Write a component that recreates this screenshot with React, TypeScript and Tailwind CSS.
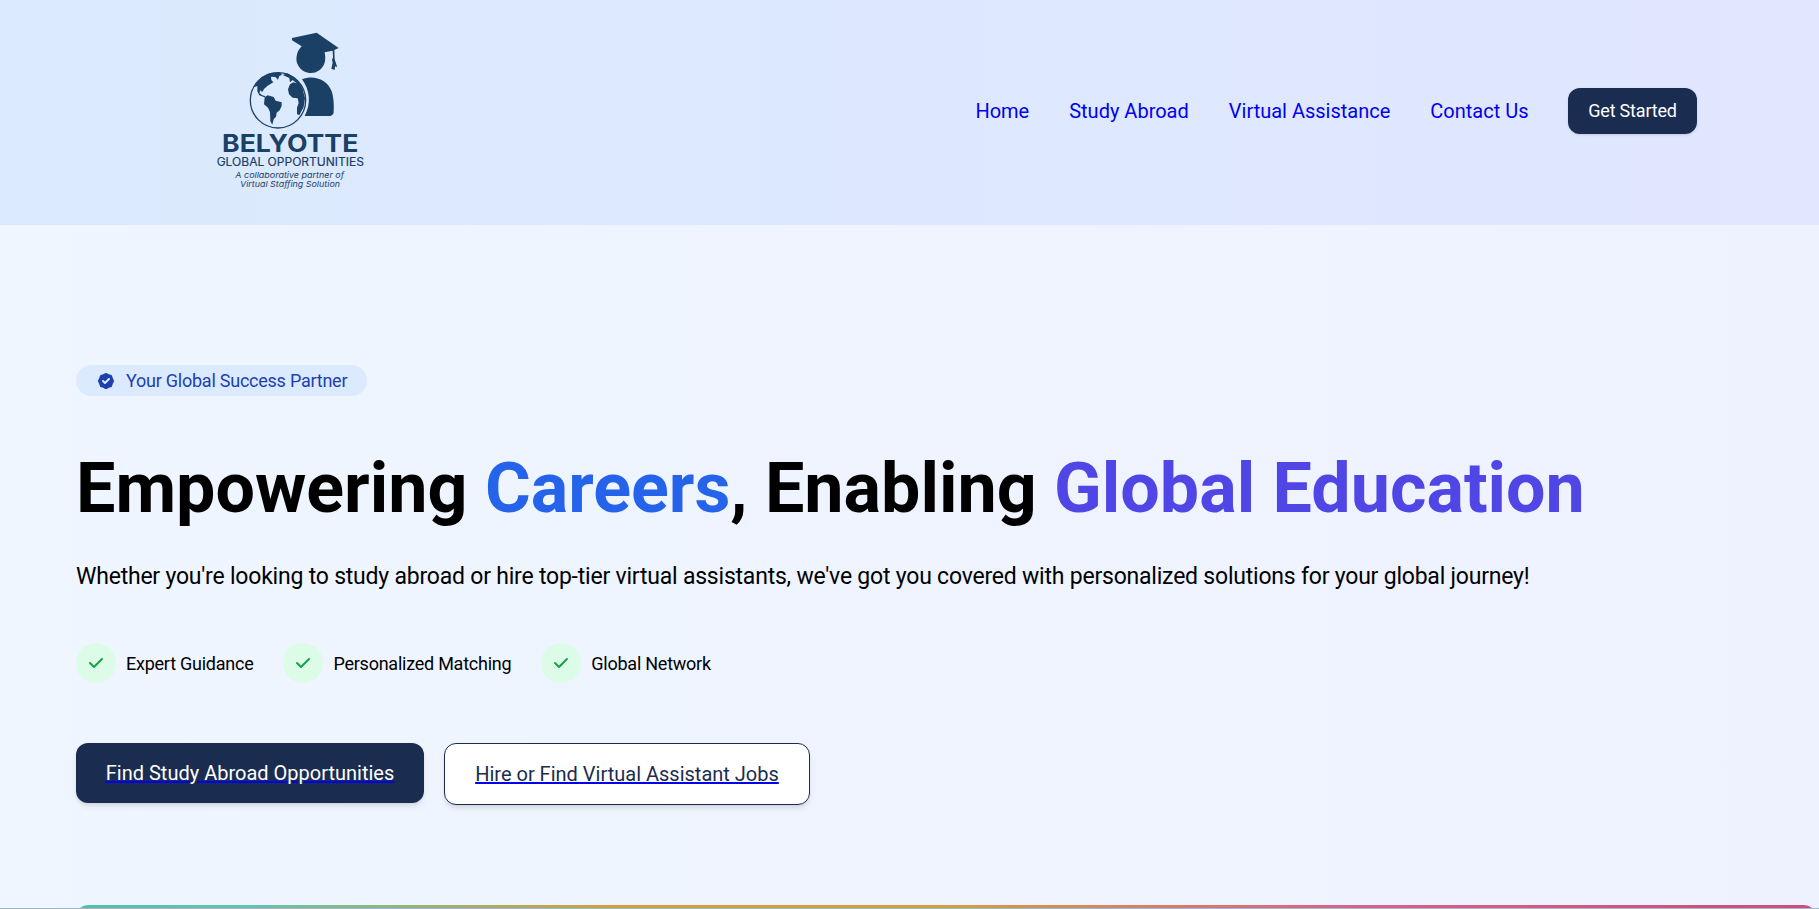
import React from "react";

const navy = "#1b4066";

function Logo() {
  return (
    <svg width="180" height="180" viewBox="0 0 540 540" role="img" aria-label="Belyotte Global Opportunities">
      <g fill={navy}>
        <path d="M276 54 L350 38 L416 84 L403 90 L404 118 L410 136 L411 142 L405 139 L404 150 L394 146 L398 128 L396 120 L399 112 L398 92 L374 97 Q377 110 375 124 A43 43 0 1 1 290 108 Q292 92 305 79 L276 61Z" />
        <path d="M306 178 C340 164 382 178 395 214 C402 235 402 262 401 278 Q398 288 386 288 L314 288 C334 252 330 210 306 178Z" />
        <circle cx="234" cy="241" r="83" fill="none" stroke={navy} strokeWidth="4" />
        <path d="M172 187 L188 170 L210 160 L240 157 L246 164 L238 168 L234 179 L226 171 L213 170 L214 180 L220 187 L203 197 L192 207 L187 216 L180 211 L179 220 L187 226 L197 229 L193 232 L178 226 L172 214 L172 198 L161 202Z" />
        <path d="M194 232 L203 226 L221 231 L227 242 L245 247 L245 258 L239 271 L230 278 L228 290 L221 298 L217 314 L211 304 L210 276 L204 263 L192 253Z" />
        <path d="M248 165 L262 160 L281 172 L298 188 L308 208 L315 235 L311 261 L298 286 L291 282 L291 263 L296 249 L293 235 L278 233 L267 223 L264 208 L270 193 L280 187 L290 190 L278 180 L270 187 L268 174Z" />
      </g>
      <g fill={navy} fontFamily="Inter, sans-serif">
        <text x="66" y="396" fontSize="71" fontWeight="700" textLength="409" lengthAdjust="spacingAndGlyphs">BELYOTTE</text>
        <text x="50" y="437" fontSize="34" fontWeight="400" stroke={navy} strokeWidth="0.500" textLength="442" lengthAdjust="spacingAndGlyphs">GLOBAL OPPORTUNITIES</text>
        <g fontSize="24" fontStyle="italic">
          <text x="106" y="474" textLength="326" lengthAdjust="spacingAndGlyphs">A collaborative partner of</text>
          <text x="120" y="500" textLength="300" lengthAdjust="spacingAndGlyphs">Virtual Staffing Solution</text>
        </g>
      </g>
    </svg>
  );
}

function VerifiedIcon() {
  return (
    <svg width="20" height="20" viewBox="0 0 20 20" fill="currentColor">
      <path
        fillRule="evenodd"
        clipRule="evenodd"
        d="M6.267 3.455a3.066 3.066 0 001.745-.723 3.066 3.066 0 013.976 0 3.066 3.066 0 001.745.723 3.066 3.066 0 012.812 2.812c.051.643.304 1.254.723 1.745a3.066 3.066 0 010 3.976 3.066 3.066 0 00-.723 1.745 3.066 3.066 0 01-2.812 2.812 3.066 3.066 0 00-1.745.723 3.066 3.066 0 01-3.976 0 3.066 3.066 0 00-1.745-.723 3.066 3.066 0 01-2.812-2.812 3.066 3.066 0 00-.723-1.745 3.066 3.066 0 010-3.976 3.066 3.066 0 00.723-1.745 3.066 3.066 0 012.812-2.812zm7.440 5.252a1 1 0 00-1.414-1.414L9 10.586 7.707 9.293a1 1 0 00-1.414 1.414l2 2a1 1 0 001.414 0l4-4z"
      />
    </svg>
  );
}

function Feature({ label }: { label: string }) {
  return (
    <div className="flex items-center gap-2.5">
      <span className="flex size-10 items-center justify-center rounded-full bg-[#dcfce7] text-[#16a34a]">
        <svg width="20" height="20" viewBox="0 0 20 20" fill="currentColor">
          <path fillRule="evenodd" clipRule="evenodd" d="M16.707 5.293a1 1 0 010 1.414l-8 8a1 1 0 01-1.414 0l-4-4a1 1 0 011.414-1.414L8 12.586l7.293-7.293a1 1 0 011.414 0z" />
        </svg>
      </span>
      <span className="pt-0.5 text-[18px] leading-7 tracking-[-0.245px]">{label}</span>
    </div>
  );
}

const links = ["Home", "Study Abroad", "Virtual Assistance", "Contact Us"];
const features = ["Expert Guidance", "Personalized Matching", "Global Network"];

export default function App() {
  return (
    <div className="h-[909px] overflow-hidden bg-gradient-to-r from-[#eff6ff] to-[#eef2ff] font-[Roboto,sans-serif] text-black">
      <header className="flex h-[225px] items-start justify-between bg-gradient-to-r from-[#dbeafe] to-[#e0e7ff] pt-5 pr-[122px] pl-[200px]">
        <Logo />
        <nav className="flex h-[182px] items-center text-[20px] text-[#0000ee]">
          <div className="flex gap-10 pr-[39.500px]">
            {links.map((l) => (
              <a key={l} href="#">{l}</a>
            ))}
          </div>
          <button className="h-[46px] w-[129px] rounded-xl bg-[#1a2c50] pb-0.5 text-[18px] tracking-[-0.2px] text-white shadow-sm">Get Started</button>
        </nav>
      </header>

      <main className="flex h-[683px] flex-col items-start overflow-hidden pt-[140px] pl-[76px]">
        <div className="flex h-[31px] w-[291px] shrink-0 items-center gap-2.5 rounded-full bg-[#dbeafe] pl-5 text-[18px] tracking-[-0.24px] text-[#1e40af]">
          <VerifiedIcon />
          <span className="whitespace-nowrap">Your Global Success Partner</span>
        </div>
        <h1 className="mt-[48px] shrink-0 text-[70px] leading-[88px] font-bold whitespace-nowrap">
          Empowering <span className="text-[#2563eb]">Careers</span>, Enabling <span className="text-[#4f46e5]">Global Education</span>
        </h1>
        <p className="mt-[29px] shrink-0 text-[23px] leading-8 tracking-[-0.214px] whitespace-nowrap">
          Whether you're looking to study abroad or hire top-tier virtual assistants, we've got you covered with personalized solutions for your global journey!
        </p>
        <div className="mt-[50px] flex shrink-0 gap-[30px]">
          {features.map((f) => (
            <Feature key={f} label={f} />
          ))}
        </div>
        <div className="mt-[60px] flex shrink-0 items-start gap-5 text-[20px]">
          <a href="#" className="flex h-[60px] w-[348px] items-center justify-center rounded-xl bg-[#1a2c50] text-white underline decoration-[#0000ee] decoration-2 shadow-md">
            Find Study Abroad Opportunities
          </a>
          <a href="#" className="flex h-[62px] w-[366px] items-center justify-center rounded-xl border border-[#1a2c50] bg-white text-[#1a2c50] underline decoration-[#0000ee] decoration-2 shadow-md">
            Hire or Find Virtual Assistant Jobs
          </a>
        </div>
        <div className="mt-[100px] h-[20px] w-[1740px] shrink-0 rounded-t-xl bg-[linear-gradient(to_right,#54bfaa_0%,#66c2a8_10%,#d09f43_31%,#d09f43_50%,#d6638c_73%,#c74f7b_100%)]" />
      </main>
      <div className="h-px bg-[#a4b8c6]" />
    </div>
  );
}
